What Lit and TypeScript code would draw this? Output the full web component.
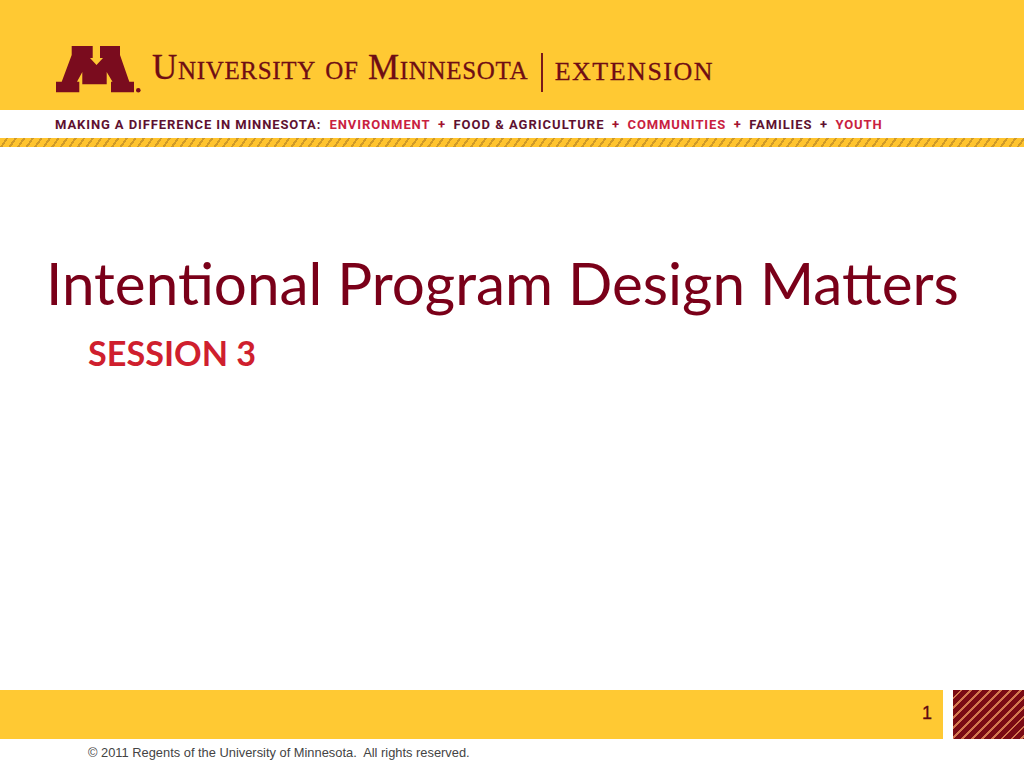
import { LitElement, html, css } from "lit";
import { customElement } from "lit/decorators.js";

@customElement("app-root")
export class AppRoot extends LitElement {
  static styles = css`
    :host { display: flex; flex-direction: column; width: 1024px; height: 768px; background: #fff; overflow: hidden; }
    .banner { height: 110px; background: #ffc933; display: flex; align-items: flex-start; padding: 45px 0 0 55px; box-sizing: border-box; }
    .mark { width: 87px; height: 48px; flex: none; }
    .wordmark { margin: 6px 0 0 10px; height: 34px; display: flex; align-items: center; font-family: "Liberation Serif", serif; color: #6f0d14; font-variant: small-caps; font-size: 35px; line-height: 34px; letter-spacing: 0.67px; white-space: nowrap; -webkit-text-stroke: 0.3px #6f0d14; }
    .divider { width: 1.5px; height: 39px; background: #7a1a1a; margin: 9px 12px 0 13px; flex: none; }
    .ext { font-size: 36.5px; letter-spacing: 1.5px; text-transform: lowercase; }
    .tagbar { height: 28px; display: flex; align-items: center; padding: 1px 0 0 55px; box-sizing: border-box; font-family: Roboto, sans-serif; font-weight: 700; font-size: 13px; letter-spacing: 0.9px; white-space: pre; }
    .dark { color: #5e1130; }
    .red { color: #c9213f; }
    .wide { letter-spacing: 1px; }
    .plus { margin: 0 7.5px; color: #a3122f; }
    .plus.d { color: #5e1130; }
    .rope { height: 9px; background: repeating-linear-gradient(125deg, #ffc42e 0 5px, #cf9a28 5px 7px); }
    main { flex: 1; padding: 102px 0 0 46px; }
    h1 { margin: 0; font-family: Lato, sans-serif; font-weight: 400; font-size: 58.4px; line-height: 66px; color: #7a0019; white-space: nowrap; }
    h2 { margin: 18px 0 0 42px; font-family: Lato, sans-serif; font-weight: 700; font-size: 34.2px; line-height: 40px; color: #cf1f2e; }
    .foot { height: 49px; display: flex; gap: 10px; }
    .bar { width: 943px; background: #ffc933; display: flex; align-items: center; justify-content: flex-end; padding: 0 11px 2px 0; box-sizing: border-box; font-family: "Liberation Sans", sans-serif; font-size: 18px; color: #5f0a12; -webkit-text-stroke: 0.3px #5f0a12; }
    .hatch { flex: 1; background: repeating-linear-gradient(135deg, #7a0a14 0 5px, #d2764e 5px 7px); }
    .copy { height: 29px; padding: 6px 0 0 88px; box-sizing: border-box; font-family: "Liberation Sans", sans-serif; font-size: 12.87px; color: #444; white-space: pre; }
  `;

  render() {
    return html`
      <div class="banner">
        <svg class="mark" viewBox="55 45 87 48" aria-hidden="true">
          <path fill="#7a0c1e" d="M71.700 46H92.700V58H90L96.500 65 103 58H100V46H120V55L129.300 81.700H134V92.300H111V81.700H112.500L106.700 72V84.300H82.300V72L77 81.700H79.300V92.300H56V81.700H61.700L71.700 55Z"/>
          <circle cx="138.300" cy="90.200" r="2.300" fill="#7a0c1e"/>
        </svg>
        <div class="wordmark">
          <span>University of Minnesota</span>
          <span class="divider"></span>
          <span class="ext">Extension</span>
        </div>
      </div>
      <div class="tagbar"><span class="dark">MAKING A DIFFERENCE IN MINNESOTA:</span><span class="red">  ENVIRONMENT</span><span class="plus">+</span><span class="dark wide">FOOD &amp; AGRICULTURE</span><span class="plus">+</span><span class="red">COMMUNITIES</span><span class="plus">+</span><span class="dark">FAMILIES</span><span class="plus d">+</span><span class="red">YOUTH</span></div>
      <div class="rope"></div>
      <main>
        <h1>Intentional Program Design Matters</h1>
        <h2>SESSION 3</h2>
      </main>
      <div class="foot">
        <div class="bar">1</div>
        <div class="hatch"></div>
      </div>
      <div class="copy">© 2011 Regents of the University of Minnesota.  All rights reserved.</div>
    `;
  }
}
